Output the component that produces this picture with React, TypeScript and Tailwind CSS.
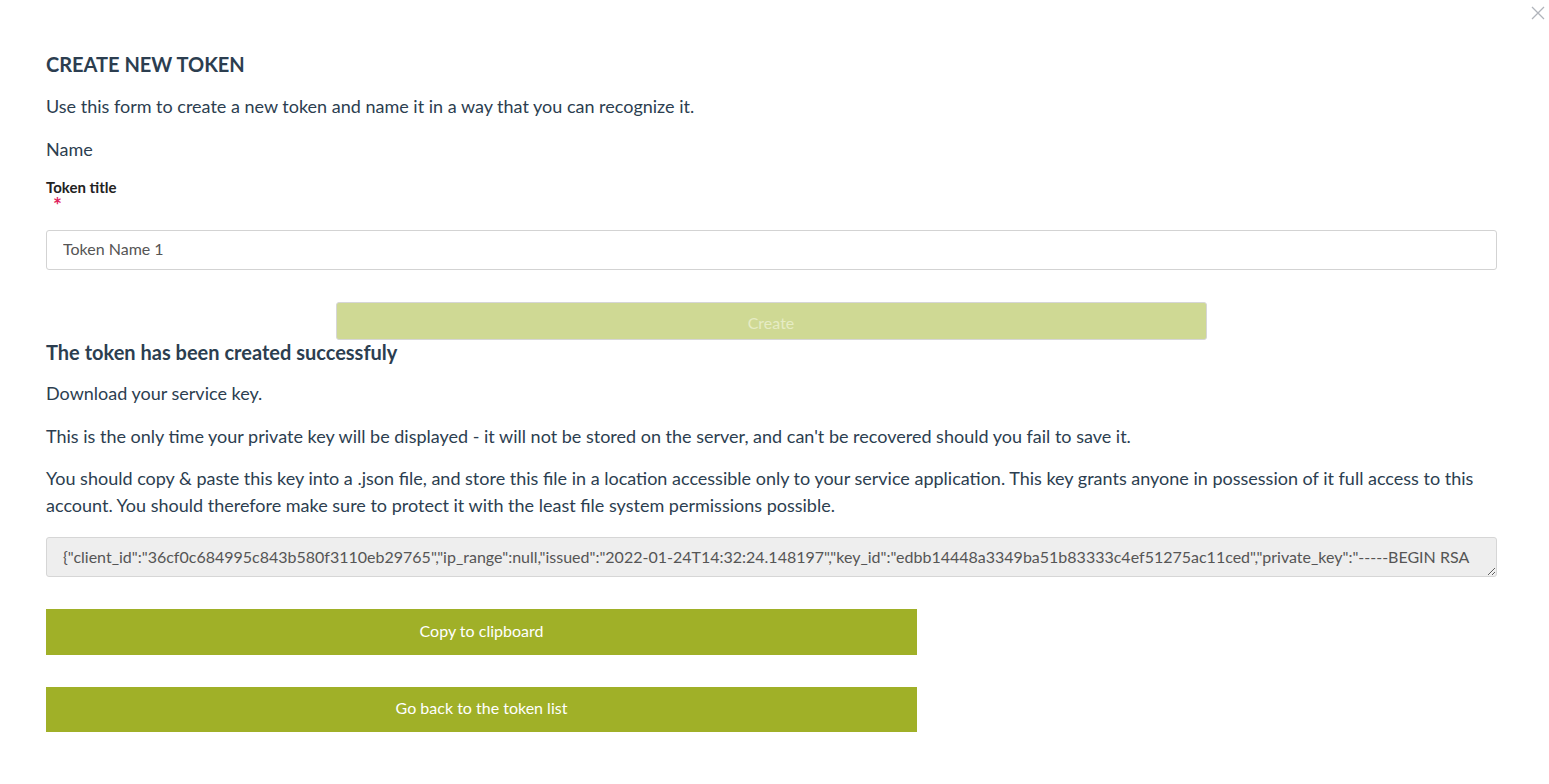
import React from "react";

const keyText =
  '{"client_id":"36cf0c684995c843b580f3110eb29765","ip_range":null,"issued":"2022-01-24T14:32:24.148197","key_id":"edbb14448a3349ba51b83333c4ef51275ac11ced","private_key":"-----BEGIN RSA PRIVATE KEY-----\\nMIIEowIBAAKCAQEA..."}';

export default function App() {
  return (
    <div className="relative min-h-screen bg-white font-['Lato','Open_Sans',sans-serif] text-[#2c3e50]">
      <button className="absolute right-0 top-[2px] p-1 text-[#b0b4bb]" aria-label="Close">
        <svg width="14" height="14" viewBox="0 0 14 14" fill="none" stroke="currentColor" strokeWidth="1.3">
          <path d="M1 1L13 13M13 1L1 13" />
        </svg>
      </button>

      <div className="pl-[46px] pr-[52px] pt-[52px]">
        <h2 className="text-[20px] font-bold leading-[24px]">CREATE NEW TOKEN</h2>
        <p className="mt-[18px] text-[18px] leading-[24px]">
          Use this form to create a new token and name it in a way that you can recognize it.
        </p>
        <p className="mt-[19px] text-[18px] leading-[24px]">Name</p>

        <label className="mt-[17px] block text-[15px] font-bold leading-[18px] text-[#222]">Token title</label>
        <span className="ml-[7px] block h-[14px] pt-[3px] text-[21px] font-bold leading-[12px] text-[#e0245e]">*</span>

        <input
          readOnly
          value="Token Name 1"
          className="mt-[20px] block h-[40px] w-full rounded-[3px] border border-[#d3d3d3] px-[16px] pb-[4px] text-[16px] text-[#555] outline-none"
        />

        <div className="mt-[32px] flex justify-center pr-[1px]">
          <button
            disabled
            className="h-[38px] w-[871px] rounded-[3px] border border-[#d6d6d6] bg-[#cfd994] pt-[3px] text-[16px] text-[#e6ecc4]"
          >
            Create
          </button>
        </div>

        <h3 className="text-[20px] font-bold leading-[24px]">The token has been created successfuly</h3>
        <p className="mt-[17px] text-[18px] leading-[24px]">Download your service key.</p>
        <p className="mt-[19px] text-[18px] leading-[24px]">
          This is the only time your private key will be displayed - it will not be stored on the server, and can't be recovered should you fail to save it.
        </p>
        <p className="mt-[17px] text-[18px] leading-[27px]">
          You should copy &amp; paste this key into a .json file, and store this file in a location accessible only to your service application. This key grants anyone in possession of it full access to this account. You should therefore make sure to protect it with the least file system permissions possible.
        </p>

        <textarea
          readOnly
          value={keyText}
          rows={1}
          className="mt-[18px] block h-[40px] w-full resize-y overflow-hidden rounded-[3px] border border-[#d6d6d6] bg-[#eeeeee] px-[16px] py-0 text-[16px] leading-[38px] text-[#555] outline-none"
        />

        <button className="mt-[32px] block h-[46px] w-[871px] bg-[#a0b028] pb-[2px] text-[16px] text-white">
          Copy to clipboard
        </button>
        <button className="mt-[32px] block h-[45px] w-[871px] bg-[#a0b028] pb-[4px] text-[16px] text-white">
          Go back to the token list
        </button>
      </div>
    </div>
  );
}
